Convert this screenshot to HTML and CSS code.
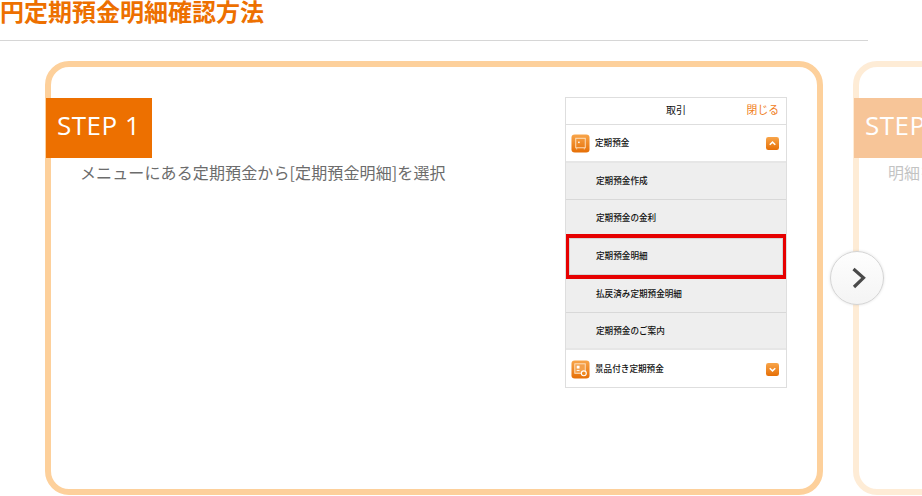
FILE: index.html
```html
<!DOCTYPE html>
<html lang="ja">
<head>
<meta charset="utf-8">
<title>円定期預金明細確認方法</title>
<link rel="stylesheet" href="styles.css">
</head>
<body>
<header class="page-head"><h1 class="page-title">円定期預金明細確認方法</h1></header>
<main class="slider">
  <section class="card">
    <div class="card-main">
      <div class="step">STEP 1</div>
      <p class="step-text">メニューにある定期預金から[定期預金明細]を選択</p>
    </div>
    <div class="phone">
      <div class="phone-head"><span class="phone-title">取引</span><span class="phone-close">閉じる</span></div>
      <div class="acc-row acc-open">
        <svg class="acc-icon" viewBox="0 0 20 20"><defs><linearGradient id="g1" x1="0" y1="0" x2="0" y2="1"><stop offset="0" stop-color="#f8a54a"/><stop offset="1" stop-color="#e66f06"/></linearGradient></defs><rect x="0.5" y="0.5" width="19" height="19" rx="3.5" fill="url(#g1)"/><rect x="5" y="4.500" width="10" height="10" fill="none" stroke="#fde3c4" stroke-width="1"/><rect x="7.500" y="8" width="1.6" height="1.6" fill="#fff"/><path d="M6 15v1.200M14 15v1.200" stroke="#fde3c4"/></svg>
        <span class="acc-label">定期預金</span>
        <svg class="acc-toggle" viewBox="0 0 14 14"><rect width="14" height="14" rx="2.5" fill="url(#g1)"/><path d="M4 8.300 7 5.500l3 2.800" fill="none" stroke="#fff" stroke-width="1.6"/></svg>
      </div>
      <div class="sub-row"><span>定期預金作成</span></div>
      <div class="sub-row"><span>定期預金の金利</span></div>
      <div class="sub-row sub-picked"><span>定期預金明細</span></div>
      <div class="sub-row"><span>払戻済み定期預金明細</span></div>
      <div class="sub-row sub-last"><span>定期預金のご案内</span></div>
      <div class="acc-row acc-end">
        <svg class="acc-icon" viewBox="0 0 20 20"><rect x="0.5" y="0.5" width="19" height="19" rx="3.5" fill="url(#g1)"/><rect x="4" y="4" width="11" height="10" fill="#f4a04a" stroke="#fde3c4"/><rect x="6" y="6" width="3" height="3" fill="#fff"/><path d="M6 11h3" stroke="#fff"/><circle cx="13.500" cy="14" r="2.6" fill="#f08a20" stroke="#fff" stroke-width="1.2"/></svg>
        <span class="acc-label">景品付き定期預金</span>
        <svg class="acc-toggle" viewBox="0 0 14 14"><rect width="14" height="14" rx="2.5" fill="url(#g1)"/><path d="M4 5.700 7 8.500l3-2.800" fill="none" stroke="#fff" stroke-width="1.6"/></svg>
      </div>
    </div>
  </section>
  <section class="card card-next">
    <div class="card-main">
      <div class="step">STEP 2</div>
      <p class="step-text">明細を選択</p>
    </div>
  </section>
  <button class="next" type="button" aria-label="次へ">
    <svg class="next-icon" viewBox="0 0 16 22" width="16" height="22"><path d="M2.500 2 12.500 10.800 3 20" fill="none" stroke="#4a4a4a" stroke-width="3.200"/></svg>
  </button>
</main>
</body>
</html>
```
FILE: styles.css
```css
* { box-sizing: border-box; }
html, body { margin: 0; height: 100%; }
body {
  width: 922px;
  height: 496px;
  overflow: hidden;
  background: #fff;
  font-family: "Noto Sans CJK JP", "Noto Sans", sans-serif;
}
.page-head {
  width: 868px;
  height: 41px;
  border-bottom: 1px solid #d6d6d6;
}
.page-title {
  margin: 0;
  font-size: 24px;
  line-height: 22px;
  font-weight: 700;
  color: #ed7000;
}
.slider {
  position: relative;
  display: flex;
  gap: 30px;
  padding: 20px 0 0 45px;
  width: 922px;
  overflow: hidden;
}
.card {
  flex: 0 0 778px;
  height: 434px;
  display: flex;
  justify-content: space-between;
  padding: 30px 30px 0 0;
  background: #fff;
  border: 6px solid #fdd09b;
  border-radius: 24px;
}
.card-next { opacity: 0.4; }
.card-main { flex: 1; margin-left: -5px; padding-top: 1px; }
.step {
  width: 106px;
  height: 60px;
  padding-left: 11px;
  background: #ed7000;
  color: #fff;
  font-family: "Open Sans", sans-serif;
  font-size: 26px;
  letter-spacing: 0.5px;
  line-height: 55px;
}
.step-text {
  margin: 3px 0 0 34px;
  font-size: 16px;
  line-height: 22px;
  letter-spacing: 0.12px;
  color: #6c6c6c;
}
.phone {
  width: 222px;
  height: 291px;
  border: 1px solid #dedede;
  background: #fff;
  color: #111;
}
.phone-head {
  position: relative;
  height: 27px;
  border-bottom: 1px solid #dedede;
  text-align: center;
  font-size: 10px;
  line-height: 23px;
}
.phone-close {
  position: absolute;
  right: 7px;
  top: 0;
  font-size: 10.8px;
  color: #f07d1a;
}
.acc-row {
  display: flex;
  align-items: center;
  padding: 0 7px 0 5px;
}
.acc-open { height: 38px; border-bottom: 2px solid #e6e6e6; }
.acc-end { height: 38px; }
.acc-icon { width: 19px; height: 19px; flex: none; }
.acc-label {
  flex: 1;
  margin: 0 0 3px 5px;
  font-size: 8.6px;
  font-weight: 500;
}
.acc-toggle { width: 13px; height: 13px; flex: none; }
.sub-row {
  display: flex;
  align-items: center;
  height: 37px;
  padding: 0 0 2px 30px;
  background: #eee;
  border-bottom: 1px solid #d8d8d8;
  font-size: 8.6px;
  font-weight: 500;
}
.sub-picked {
  height: 45px;
  margin-top: -3px;
  padding: 0 0 3px 27px;
  border-width: 4px 3px;
  border-style: solid;
  border-color: #e60000;
  box-shadow: inset 0 0 0 1px #d4d4d4;
}
.sub-picked + .sub-row { height: 34px; padding-bottom: 6px; }
.sub-last { border-bottom: 2px solid #e6e6e6; }
.next {
  position: absolute;
  left: 830px;
  top: 210px;
  width: 54px;
  height: 54px;
  padding: 0;
  display: flex;
  align-items: center;
  justify-content: center;
  border: 1px solid #d4d4d4;
  border-radius: 50%;
  background: linear-gradient(#fefefe, #f4f4f4);
  box-shadow: 0 0 3px rgba(0, 0, 0, 0.12);
}
.next-icon { margin-left: 3px; }
```
